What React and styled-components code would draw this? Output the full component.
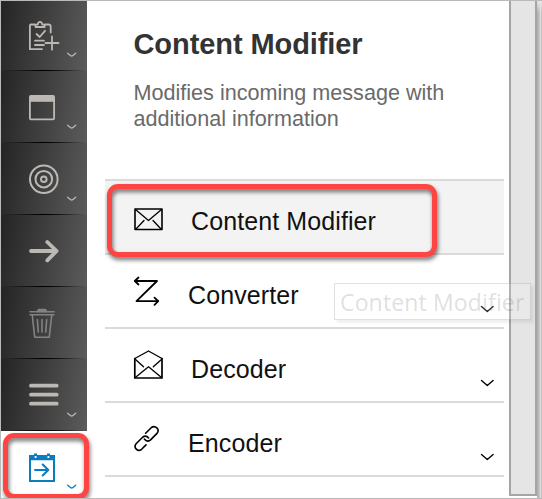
import React from "react";
import styled, { createGlobalStyle } from "styled-components";

const GlobalStyle = createGlobalStyle`
  * { box-sizing: border-box; }
  body { margin: 0; background: #fff; overflow: hidden; }
`;

const Frame = styled.main`
  position: relative;
  display: flex;
  width: 542px;
  height: 499px;
  overflow: hidden;
  background: #fff;
  border: 1px solid #bababa;
  border-right: 0;
  font-family: "Liberation Sans", Arial, sans-serif;
`;

const Rail = styled.nav`
  width: 86px;
  flex: none;
  margin-top: -2px;
`;

const Tool = styled.div`
  display: flex;
  align-items: flex-start;
  gap: 7px;
  width: 86px;
  height: 72px;
  padding: 20px 0 0 27px;
  color: ${(p) => (p.$active ? "#0a7cc0" : p.$disabled ? "#858381" : "#bcb8b3")};
  background: ${(p) =>
    p.$active
      ? "#fff"
      : `linear-gradient(90deg, transparent, #000 45%, #000 55%, transparent) 0 100% / 100% 1px no-repeat,
         linear-gradient(100deg, #242424, #5b5b5b)`};
`;

const ToolChevron = styled.svg`
  margin-top: 33px;
`;

const Panel = styled.section`
  width: 421px;
  flex: none;
  padding-left: 18px;
`;

const Heading = styled.header`
  height: 178px;
  padding: 24px 0 0 28.5px;
`;

const Title = styled.h1`
  margin: 0;
  font-size: 29px;
  line-height: 38px;
  letter-spacing: -0.08px;
  color: #333;
  white-space: nowrap;
`;

const Description = styled.p`
  width: 340px;
  margin: 17px 0 0;
  font-size: 21.6px;
  line-height: 26px;
  color: #6a6a6a;
`;

const List = styled.div`
  width: 399px;
  border-top: 2px solid #dadada;
`;

const Row = styled.div`
  display: flex;
  height: 74px;
  padding-left: 28px;
  border-bottom: 2px solid #dadada;
  background: ${(p) => (p.$selected ? "#f3f3f3" : "#fff")};
`;

const RowIcon = styled.svg`
  flex: none;
  margin-top: ${(p) => p.$top}px;
`;

const Label = styled.span`
  margin: ${(p) => (p.$wide ? "25px 0 0 26px" : "25px 0 0 23px")};
  width: ${(p) => (p.$wide ? 289 : 292)}px;
  font-size: 25px;
  line-height: 30px;
  letter-spacing: 0.1px;
  color: #111;
  white-space: nowrap;
`;

const RowChevron = styled.svg`
  flex: none;
  margin-top: 50px;
`;

const Gutter = styled.aside`
  width: 28px;
  height: 495px;
  margin: 0 0 0 1px;
  background: #e5e5e5;
  border: 2px solid #a5a5a5;
  border-top: 0;
`;

const Edge = styled.div`
  width: 5px;
  flex: none;
  height: 497px;
  background: linear-gradient(180deg, #e6e6e6, transparent 12px),
    linear-gradient(90deg, #b0b0b0 0 1px, #bbb 1px 2px, #c5c5c5 2px 3px, #ddd 3px 4px, #c2c2c2 4px);
`;

const Highlight = styled.div`
  position: absolute;
  left: ${(p) => p.$x}px;
  top: ${(p) => p.$y}px;
  width: ${(p) => p.$w}px;
  height: ${(p) => p.$h}px;
  border: 5px solid #ff4444;
  border-radius: 11px;
  filter: drop-shadow(1px 3px 2px rgba(0, 0, 0, 0.55));
`;

const Tooltip = styled.div`
  position: absolute;
  left: 333px;
  top: 282px;
  width: 197px;
  height: 37px;
  padding-left: 5px;
  border: 1px solid rgba(115, 115, 115, 0.22);
  background: rgba(255, 255, 255, 0.16);
  box-shadow: 3px 3px 2px rgba(0, 0, 0, 0.06);
  font: 23px/36px "Open Sans", "Noto Sans", sans-serif;
  letter-spacing: 0.15px;
  color: rgba(90, 90, 90, 0.2);
  white-space: nowrap;
`;

const toolIcons = {
  tasks: (
    <g strokeWidth="1.8">
      <path d="M7 5.5H3Q1.9 5.5 1.9 7V30.2H14M17 5.5h3.5Q22.7 5.5 22.7 7.5V13.5" />
      <path d="M7.5 8V5.7h2.2Q10 2.8 12 2.8t2.3 2.9h2.3V8z" />
      <path d="M8.5 15l3.2 3L17 11.8M7 21.7h9M7 26h9M17.5 24h13M24 17.5v13.2" />
    </g>
  ),
  window: (
    <g strokeWidth="1.8">
      <rect x="1.9" y="5" width="24.2" height="23.3" rx="1" />
      <path d="M2 4.5h24v6.3H2z" fill="currentColor" stroke="none" />
    </g>
  ),
  target: (
    <g strokeWidth="2">
      <circle cx="15.8" cy="16.2" r="13.8" />
      <circle cx="15.8" cy="16.2" r="8.3" />
      <circle cx="15.8" cy="16.2" r="2.8" />
    </g>
  ),
  arrow: <path d="M3 16H28.5M19.3 7l9.3 9-9.3 9.3" strokeWidth="3.8" />,
  trash: (
    <g strokeWidth="1.6">
      <path d="M2 4.8h24M2 7.8h24M4.3 8.5l2.4 21.7h14.6L23.7 8.5" />
      <path d="M9.5 4.5l1-2h7l1 2z" fill="currentColor" />
      <path d="M9.3 12.5l1 12.5M14 12.5V25M18.7 12.5l-1 12.5" />
    </g>
  ),
  menu: <path d="M3 6.7h25.7M3 15.7h25.7M3 24.7h25.7" strokeWidth="3.8" />,
  schedule: (
    <g strokeWidth="2">
      <path d="M2 7v23h24V7" strokeLinejoin="miter" />
      <path d="M1 4h5V2.5h3V4h10V2.5h3V4h5v5.3H1z" fill="currentColor" stroke="none" />
      <path d="M6.7 5h1.8v2H6.7zM19.5 5h1.8v2h-1.8z" fill="#fff" stroke="none" />
      <path d="M7 19H20M14.7 13.5l5.6 5.5-5.6 5.5" />
    </g>
  ),
};

const rowIcons = {
  mail: (
    <g>
      <path d="M2 5h27v20.5H2z" strokeWidth="1.6" />
      <path d="M2.5 5.5l13 11 13-11M3 25l8-8.5M28 25l-8-8.5" strokeWidth="1.3" />
    </g>
  ),
  converter: (
    <g strokeWidth="1.8">
      <path d="M2 5h22L3.5 25.2h21.5" />
      <path d="M5.5 1.5L1.8 5l3.7 3.5M21.5 21.6l3.7 3.6-3.7 3.6" />
    </g>
  ),
  openMail: (
    <g>
      <path d="M1.8 9.5L15.5 2 29 9.5" strokeWidth="1.3" />
      <path d="M1.8 9.5V29H29V9.5" strokeWidth="1.7" />
      <path d="M2 10l8.5 7.8M29 10l-8.7 7.8M2.3 28.5l13.2-10.7 13 10.7" strokeWidth="1.3" />
    </g>
  ),
  link: (
    <g strokeWidth="1.6">
      <path d="M12.6 9.3l5.6-5.6q3-2.4 5.6.2t.2 5.5l-6.7 6.7q-3.2 2.4-6-1" />
      <path d="M13 20.9l-4.4 4.4q-2.9 2.3-5.3-.2t-.2-5.3l6.8-6.8q3-2.3 5.7.9" />
    </g>
  ),
};

const strokeProps = {
  fill: "none",
  stroke: "currentColor",
  strokeLinecap: "round",
  strokeLinejoin: "round",
};

const tools = [
  { icon: "tasks", menu: true },
  { icon: "window", menu: true },
  { icon: "target", menu: true },
  { icon: "arrow" },
  { icon: "trash", disabled: true },
  { icon: "menu", menu: true },
  { icon: "schedule", menu: true, active: true },
];

const rows = [
  { label: "Content Modifier", icon: "mail", top: 23, selected: true, wide: true },
  { label: "Converter", icon: "converter", top: 21, menu: true },
  { label: "Decoder", icon: "openMail", top: 20, menu: true, wide: true },
  { label: "Encoder", icon: "link", top: 21, menu: true },
];

export default function App() {
  return (
    <>
      <GlobalStyle />
      <Frame>
        <Rail>
          {tools.map((t) => (
            <Tool key={t.icon} $active={t.active} $disabled={t.disabled}>
              <svg width="32" height="32" {...strokeProps}>
                {toolIcons[t.icon]}
              </svg>
              {t.menu && (
                <ToolChevron width="10" height="7" {...strokeProps} strokeWidth="1.3">
                  <path d="M.7 1.2L3.7 3.7Q4.7 4.3 5.7 3.7L8.7 1.2" />
                </ToolChevron>
              )}
            </Tool>
          ))}
        </Rail>
        <Panel>
          <Heading>
            <Title>Content Modifier</Title>
            <Description>Modifies incoming message with additional information</Description>
          </Heading>
          <List>
            {rows.map((r) => (
              <Row key={r.label} $selected={r.selected}>
                <RowIcon $top={r.top} width="32" height="32" {...strokeProps}>
                  {rowIcons[r.icon]}
                </RowIcon>
                <Label $wide={r.wide}>{r.label}</Label>
                {r.menu && (
                  <RowChevron width="15" height="9" {...strokeProps} strokeWidth="1.4">
                    <path d="M1.5 1.5L7.3 6.5l5.8-5" />
                  </RowChevron>
                )}
              </Row>
            ))}
          </List>
        </Panel>
        <Gutter />
        <Edge />
        <Highlight $x={105.5} $y={182.5} $w={330} $h={73} />
        <Highlight $x={2} $y={431.5} $w={86} $h={66.5} />
        <Tooltip>Content Modifier</Tooltip>
      </Frame>
    </>
  );
}
